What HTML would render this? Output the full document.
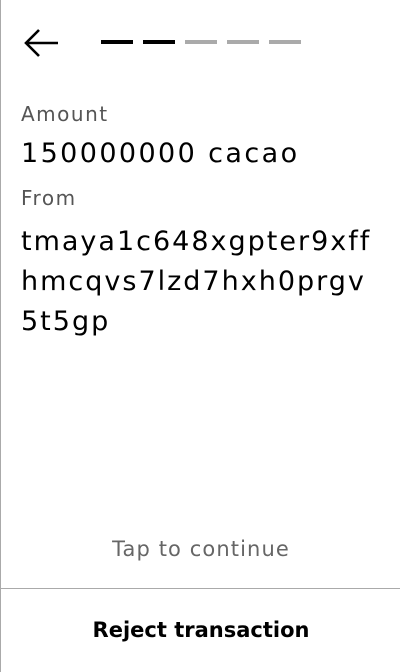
<!DOCTYPE html>
<html><head><style>
html,body{margin:0;padding:0;background:#fff;}
body{width:400px;height:672px;position:relative;overflow:hidden;font-family:"DejaVu Sans","Liberation Sans",sans-serif;border-left:1px solid #aaa;box-sizing:border-box;}
.d{position:absolute;top:40px;width:32px;height:4px;}
.t{position:absolute;left:20px;white-space:nowrap;}
</style></head><body>
<svg style="position:absolute;left:20px;top:26px" width="40" height="36" viewBox="0 0 40 36">
<path d="M5 17H37M18 4L5 17L18 30" stroke="#000" stroke-width="2.6" fill="none"/>
</svg>
<div class="d" style="left:100px;background:#000"></div>
<div class="d" style="left:142px;background:#000"></div>
<div class="d" style="left:184px;background:#aaa"></div>
<div class="d" style="left:226px;background:#aaa"></div>
<div class="d" style="left:268px;background:#aaa"></div>
<div class="t" style="top:102px;font-size:20px;color:#555;letter-spacing:1.5px">Amount</div>
<div class="t" style="top:138px;font-size:27px;color:#000;letter-spacing:2.4px">150000000 cacao</div>
<div class="t" style="top:186px;font-size:20px;color:#555;letter-spacing:1.5px">From</div>
<div class="t" style="top:222px;font-size:27px;color:#000;line-height:40px;letter-spacing:2px">tmaya1c648xgpter9xff<br>hmcqvs7lzd7hxh0prgv<br>5t5gp</div>
<div style="position:absolute;left:0;width:400px;top:537px;text-align:center;font-size:21px;color:#666;letter-spacing:1.1px">Tap to continue</div>
<div style="position:absolute;left:0;width:400px;top:588px;height:1px;background:#aaa"></div>
<div style="position:absolute;left:0;width:400px;top:618px;text-align:center;font-size:21px;font-weight:bold;color:#000;letter-spacing:0">Reject transaction</div>
</body></html>
